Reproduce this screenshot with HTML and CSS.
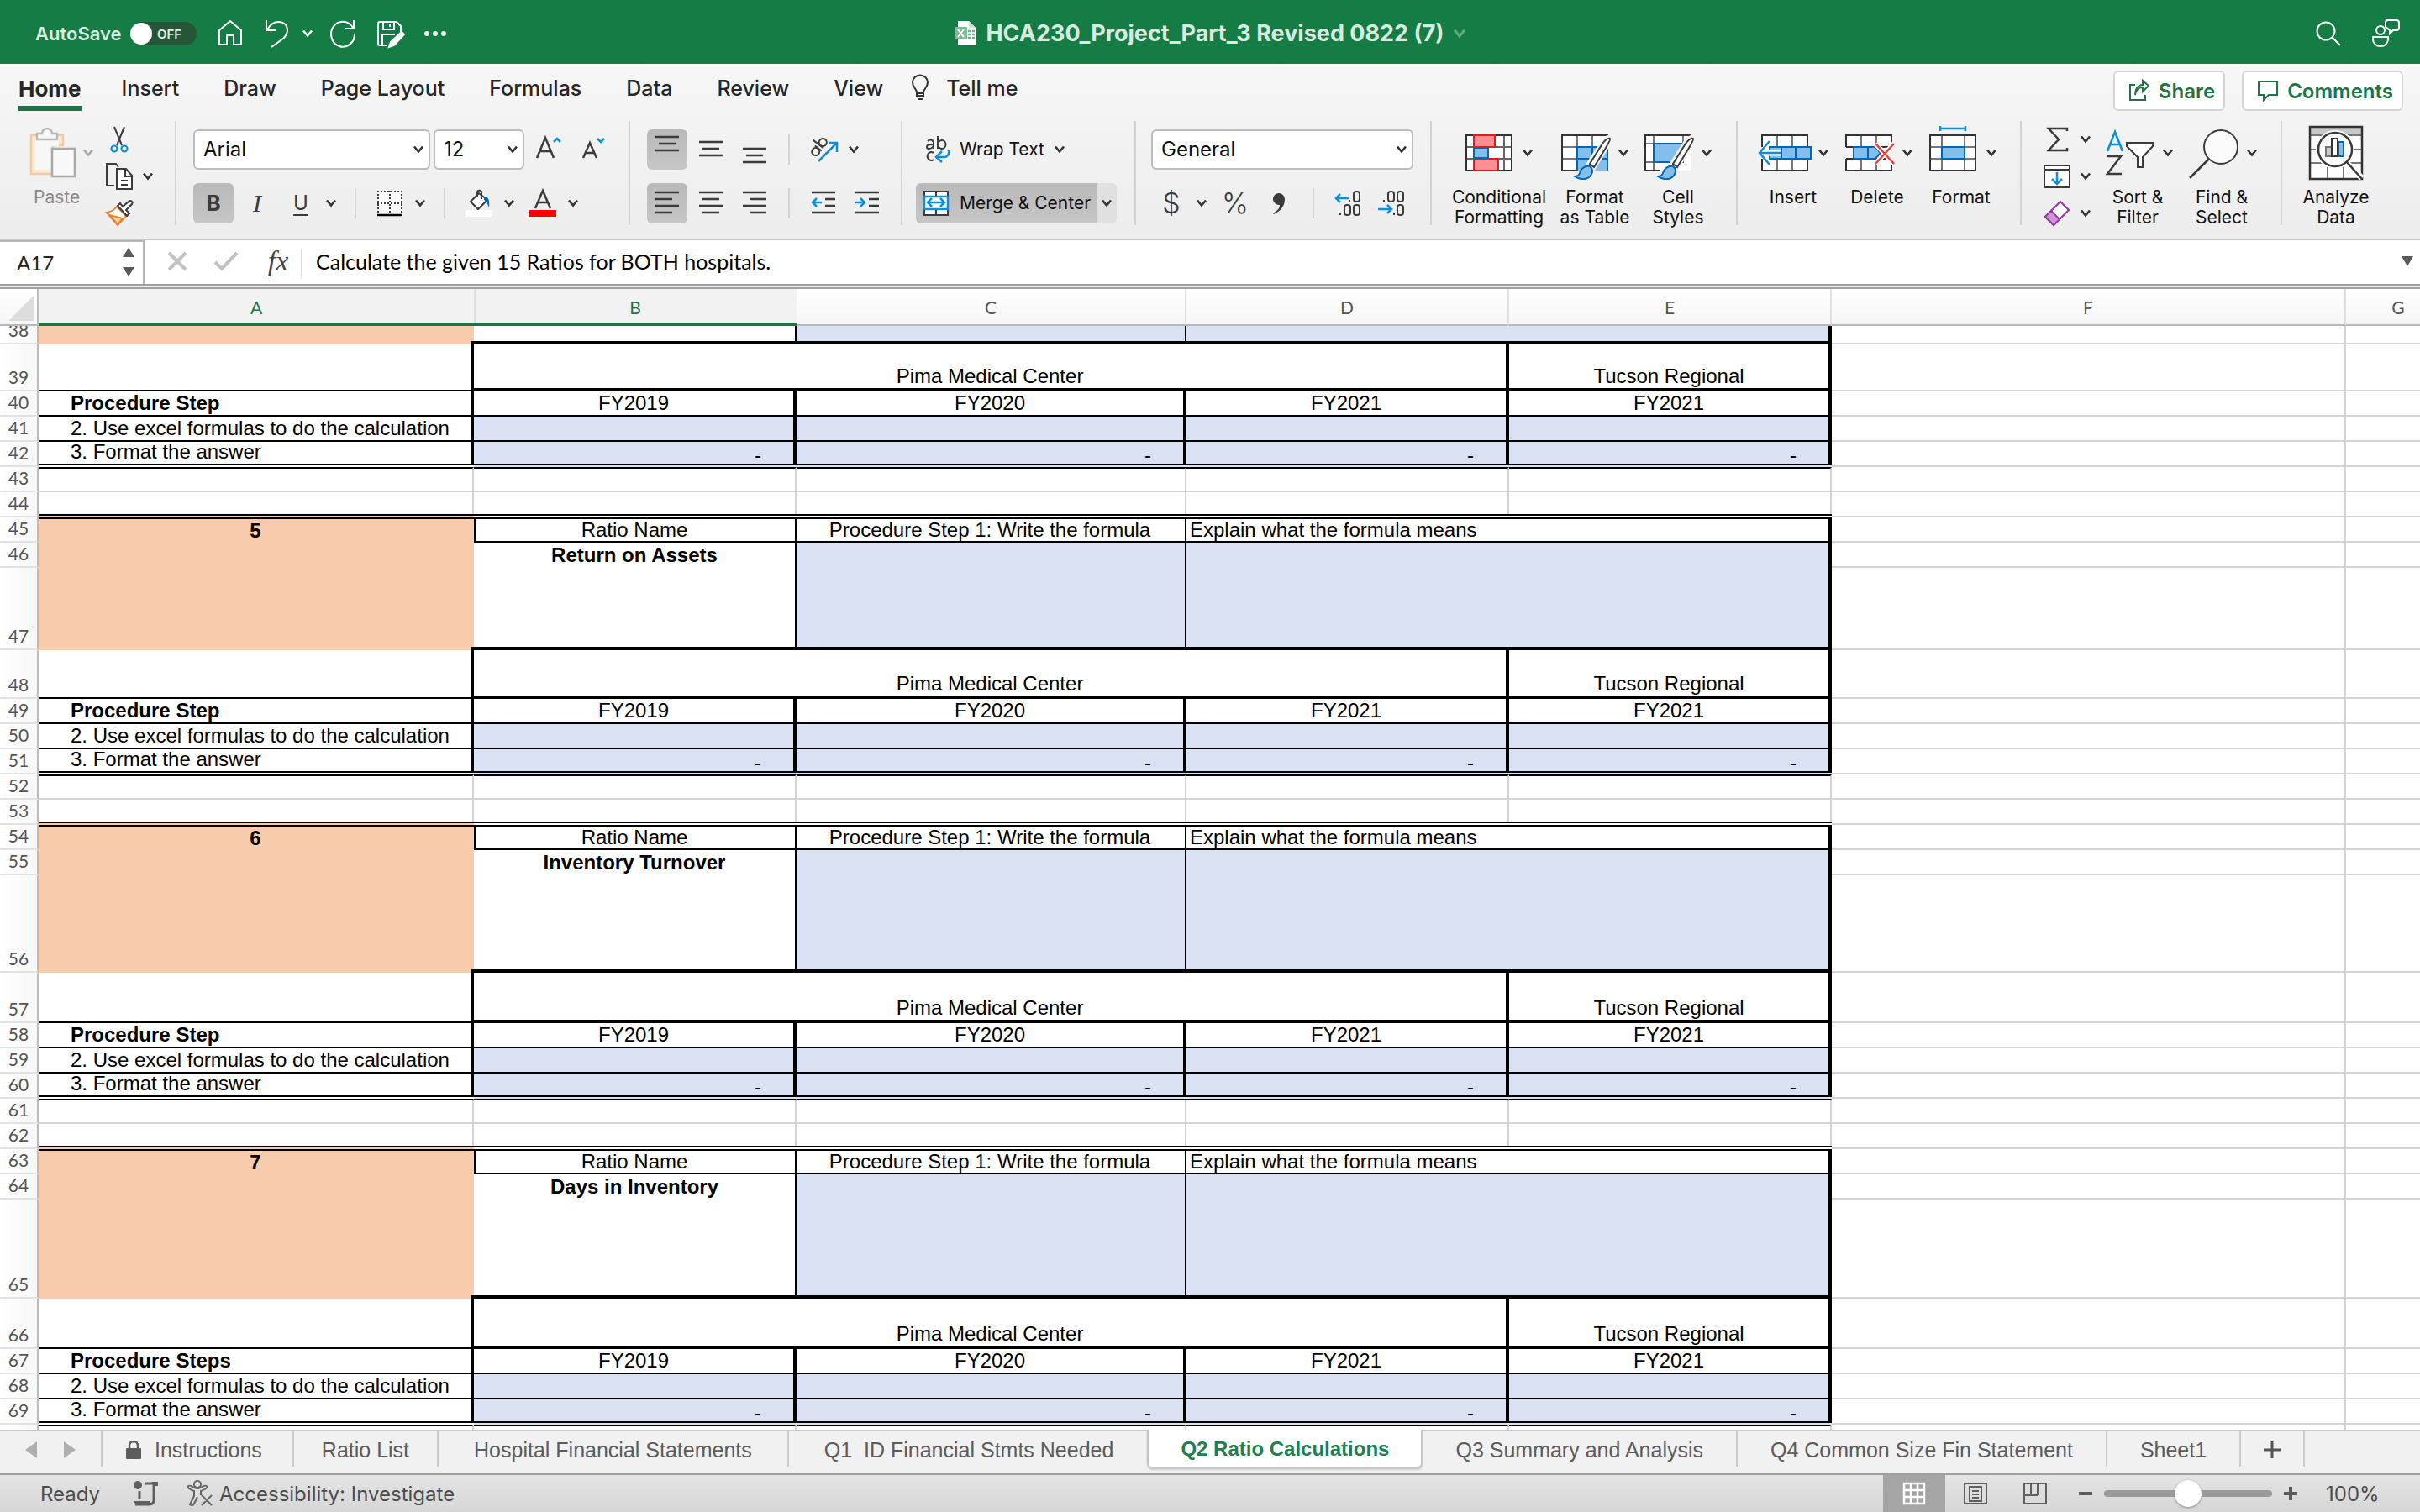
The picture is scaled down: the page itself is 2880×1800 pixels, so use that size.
FILE: index.html
```html
<!DOCTYPE html>
<html lang="en">
<head>
<meta charset="utf-8">
<title>HCA230_Project_Part_3 Revised 0822 (7)</title>
<link rel="stylesheet" href="styles.css">
</head>
<body>
<svg class="defs" aria-hidden="true">
  <symbol id="chev" viewBox="0 0 12 10"><path d="M1 1.500l5 6 5-6" fill="none" stroke="currentColor" stroke-width="2.600"/></symbol>
  <symbol id="brush" viewBox="0 0 60 64"><path d="M58 14c-3-1-6 2-9 6L33 45l5 5 15-24c3-5 6-10 5-12z" fill="#fff" stroke="#f3f3f3" stroke-width="6"/><path d="M58 15c-3-1-6 2-9 6L34 45l5 4 14-23c3-5 6-10 5-11z" fill="#fff" stroke="#3b3b3b" stroke-width="2"/><path d="M34 48c-6-1-11 3-12 8-1 3-3 4-6 4 6 4 13 4 17 1 4-3 5-8 3-11z" fill="#83beec" stroke="#0067b0" stroke-width="2"/></symbol>
</svg>
<div class="app">
  <header class="titlebar">
    <div class="quick">
      <span class="autosave">AutoSave</span>
      <button class="toggle" type="button" aria-label="AutoSave off"><span class="knob"></span><span>OFF</span></button>
      <button class="tbtn" type="button" aria-label="Home"><svg width="32" height="32" viewBox="0 0 32 32"><path d="M3 12L16 1l13 11v17H20V18h-8v11H3z" stroke-linejoin="round"/></svg></button>
      <button class="tbtn undo" type="button" aria-label="Undo"><svg width="32" height="32" viewBox="0 0 32 32"><path d="M3 0v12h11M4 11C8 5 12 2 17 2c7 0 11 4 11 10 0 4-2 7-5 10L9 32"/></svg><svg class="chev" width="12" height="10"><use href="#chev"/></svg></button>
      <button class="tbtn" type="button" aria-label="Redo"><svg width="34" height="34" viewBox="0 0 34 34"><path d="M31 1v10H21M30 10A14 15 0 1 0 32 17"/></svg></button>
      <button class="tbtn" type="button" aria-label="Save"><svg width="32" height="32" viewBox="0 0 32 32"><path d="M13 30H4a2 2 0 0 1-2-2V4a2 2 0 0 1 2-2h20l5 5v7M8 2v9h13V2M16 4v4M7 30V17h15"/><path d="M30 14l3 3-12 13-6 2 2-6z" fill="#fff"/></svg></button>
      <button class="tbtn" type="button" aria-label="More"><svg width="28" height="8" viewBox="0 0 28 8"><g fill="#e6f2ea" stroke="none"><circle cx="4" cy="4" r="3"/><circle cx="14" cy="4" r="3"/><circle cx="24" cy="4" r="3"/></g></svg></button>
    </div>
    <div class="doc">
      <svg width="28" height="30" viewBox="0 0 28 30"><path d="M5 0h13l8 8v21H5z" fill="#fff"/><path d="M18 0v8h8z" fill="#cfe5d8"/><rect x="1" y="7" width="15" height="15" rx="1" fill="#7fb898"/><path d="M5 10l7 9M12 10l-7 9" stroke="#fff" stroke-width="2"/><path d="M17 12h3M17 16h3M17 20h3M22 12h3M22 16h3M22 20h3" stroke="#6fae8b" stroke-width="2.500"/></svg>
      <h1>HCA230_Project_Part_3 Revised 0822 (7)</h1>
      <svg class="chev" width="16" height="12"><use href="#chev"/></svg>
    </div>
    <div class="account">
      <button class="tbtn" type="button" aria-label="Search"><svg width="30" height="30" viewBox="0 0 30 30"><circle cx="12" cy="12" r="10.500"/><path d="M20 20l9 9"/></svg></button>
      <button class="tbtn" type="button" aria-label="Presence"><svg width="34" height="34" viewBox="0 0 34 34"><circle cx="11" cy="13" r="5"/><path d="M2 21h18v3a9 8 0 0 1-18 0zM19 1h11a3 3 0 0 1 3 3v6a3 3 0 0 1-3 3h-4l-4 4v-4l-5-4V4a3 3 0 0 1 2-3z"/></svg></button>
    </div>
  </header>

  <nav class="tabs">
    <a class="on" href="#home">Home</a><a href="#insert">Insert</a><a href="#draw">Draw</a><a href="#layout">Page Layout</a><a href="#formulas">Formulas</a><a href="#data">Data</a><a href="#review">Review</a><a href="#view">View</a>
    <a class="tell" href="#tell"><svg width="22" height="32" viewBox="0 0 22 32"><path d="M7 21c0-4-5-6-5-12a9 8.500 0 0 1 18 0c0 6-5 8-5 12v4H7zM7 22h8M8 29h6" fill="none" stroke="#333" stroke-width="2"/></svg>Tell me</a>
    <span class="grow"></span>
    <button class="pill" type="button"><svg width="26" height="26" viewBox="0 0 26 26"><path d="M8 6H2v18h18v-6M8 18c1-7 5-9 9-9v5l7-7-7-6v5C11 6 8 11 8 18z"/></svg>Share</button>
    <button class="pill" type="button"><svg width="26" height="26" viewBox="0 0 26 26"><path d="M2 2h22v16H14l-6 6v-6H2z"/></svg>Comments</button>
  </nav>

  <section class="ribbon" aria-label="Home ribbon">
    <div class="group g-clip">
      <button class="paste" type="button"><span class="pic"><svg width="56" height="62" viewBox="0 0 56 62"><path d="M2 10h38v12H28v34H2z" fill="#fbead0" stroke="#f3c9a4" stroke-width="2.500"/><path d="M7 14h28v9h-9v28H7z" fill="#f7f7f7"/><path d="M9 15V8h6a6 6 0 0 1 12 0h6v7z" fill="#f7f7f7" stroke="#b9b9b9" stroke-width="2.500"/><path d="M27 26h27v33H27z" fill="#f8f8f8" stroke="#a9a9a9" stroke-width="2.500"/></svg><svg class="chev dim" width="12" height="10"><use href="#chev"/></svg></span><span class="cap">Paste</span></button>
      <div class="stack">
        <button type="button" aria-label="Cut"><svg width="32" height="32" viewBox="0 0 32 32"><path d="M10 1l9 22M22 1l-9 22" stroke="#3b3b3b" stroke-width="2" fill="none"/><circle cx="10" cy="27" r="3.500" fill="none" stroke="#0f8fd3" stroke-width="2.200"/><circle cx="22" cy="27" r="3.500" fill="none" stroke="#0f8fd3" stroke-width="2.200"/></svg></button>
        <button type="button" aria-label="Copy"><svg width="32" height="32" viewBox="0 0 32 32"><path d="M10 27H1V1h11l3 4" fill="none" stroke="#3b3b3b" stroke-width="2"/><path d="M13 7h11l7 8v16H13zM23 8v8h8M18 21h8M18 26h8" fill="#fff" stroke="#3b3b3b" stroke-width="2"/></svg><svg class="chev" width="12" height="10"><use href="#chev"/></svg></button>
        <button type="button" aria-label="Format painter"><svg width="32" height="32" viewBox="0 0 32 32"><path d="M13 8C10 12 6 14 1 15l13 15 10-11z" fill="#fff" stroke="#ec7f31" stroke-width="2"/><path d="M4 18l16 4-6 7z" fill="#fbd9a0" stroke="#ec7f31" stroke-width="2"/><path d="M14 7l11 12 3-3-4-4 7-7c2-3-2-5-4-3l-7 6-3-4z" fill="#fff" stroke="#3b3b3b" stroke-width="2"/></svg></button>
      </div>
    </div>

    <div class="group rows g-font">
      <div class="row">
        <span class="pick w-font"><select aria-label="Font"><option>Arial</option></select><svg class="chev" width="12" height="10"><use href="#chev"/></svg></span>
        <span class="pick w-size"><select aria-label="Font size"><option>12</option></select><svg class="chev" width="12" height="10"><use href="#chev"/></svg></span>
        <button class="ib" type="button" aria-label="Grow font"><svg width="32" height="32" viewBox="0 0 32 32"><path d="M3 26L13 2l10 24M7 18h12" class="k"/><path d="M23 7l4-4 4 4" class="b"/></svg></button>
        <button class="ib" type="button" aria-label="Shrink font"><svg width="32" height="32" viewBox="0 0 32 32"><path d="M6 26l8-18 8 18M9 20h10" class="k"/><path d="M23 3l4 4 4-4" class="b"/></svg></button>
      </div>
      <div class="row">
        <button class="ib on bold" type="button">B</button>
        <button class="ib ital" type="button">I</button>
        <span class="split"><button class="ib und" type="button">U</button><button class="dd" type="button" aria-label="Underline options"><svg class="chev" width="12" height="10"><use href="#chev"/></svg></button></span>
        <i class="sep"></i>
        <span class="split"><button class="ib" type="button" aria-label="Borders"><svg width="32" height="32" viewBox="0 0 32 32"><path d="M2 2h28v28H2z" fill="#fafafa"/><path d="M1 2h30M1 16h30M2 1v28M16 1v28M30 1v28" stroke="#3b3b3b" stroke-width="2" stroke-dasharray="2 2"/><path d="M1 30h30" stroke="#000" stroke-width="2.500"/></svg></button><button class="dd" type="button" aria-label="Border options"><svg class="chev" width="12" height="10"><use href="#chev"/></svg></button></span>
        <i class="sep"></i>
        <span class="split"><button class="ib" type="button" aria-label="Fill colour"><svg width="32" height="32" viewBox="0 0 32 32"><path d="M16 4L6 14l9 9 11-11zM14 8V3c0-3 5-3 5 0v8" fill="#fff" stroke="#3b3b3b" stroke-width="2"/><path d="M22 8c5 0 7 4 6 13-2-5-3-7-6-9z" fill="#0067b0"/><path d="M0 24h32v8H0z" fill="#fff"/></svg></button><button class="dd" type="button" aria-label="Fill options"><svg class="chev" width="12" height="10"><use href="#chev"/></svg></button></span>
        <span class="split"><button class="ib" type="button" aria-label="Font colour"><svg width="32" height="32" viewBox="0 0 32 32"><path d="M7 22l9-21 9 21M10 15h12" class="k"/><path d="M0 24h32v8H0z" fill="#f00"/></svg></button><button class="dd" type="button" aria-label="Font colour options"><svg class="chev" width="12" height="10"><use href="#chev"/></svg></button></span>
      </div>
    </div>

    <div class="group rows g-align">
      <div class="row">
        <button class="ib on" type="button" aria-label="Top align"><svg width="32" height="32" viewBox="0 0 32 32"><path d="M2 1h28M6 9h20M2 17h28" class="k"/></svg></button>
        <button class="ib" type="button" aria-label="Middle align"><svg width="32" height="32" viewBox="0 0 32 32"><path d="M2 7h28M6 15h20M2 23h28" class="k"/></svg></button>
        <button class="ib" type="button" aria-label="Bottom align"><svg width="32" height="32" viewBox="0 0 32 32"><path d="M2 15h28M6 23h20M2 31h28" class="k"/></svg></button>
        <i class="sep"></i>
        <span class="split"><button class="ib" type="button" aria-label="Orientation"><svg width="32" height="32" viewBox="0 0 32 32"><g class="k thin" transform="rotate(-52 11 13)"><circle cx="4" cy="13" r="4.500"/><path d="M9 8v10M13 2v16"/><circle cx="18" cy="13" r="4.500"/></g><path d="M10 30L31 9M22 8h10v11" class="b"/></svg></button><button class="dd" type="button" aria-label="Orientation options"><svg class="chev" width="12" height="10"><use href="#chev"/></svg></button></span>
      </div>
      <div class="row">
        <button class="ib on" type="button" aria-label="Align left"><svg width="32" height="32" viewBox="0 0 32 32"><path d="M2 3h28M2 11h20M2 19h28M2 27h20" class="k"/></svg></button>
        <button class="ib" type="button" aria-label="Centre"><svg width="32" height="32" viewBox="0 0 32 32"><path d="M2 3h28M6 11h20M2 19h28M6 27h20" class="k"/></svg></button>
        <button class="ib" type="button" aria-label="Align right"><svg width="32" height="32" viewBox="0 0 32 32"><path d="M2 3h28M10 11h20M2 19h28M10 27h20" class="k"/></svg></button>
        <i class="sep"></i>
        <button class="ib" type="button" aria-label="Decrease indent"><svg width="32" height="32" viewBox="0 0 32 32"><path d="M2 3h28M18 11h12M18 19h12M2 27h28" class="k"/><path d="M14 15H3M8 10l-5 5 5 5" class="b"/></svg></button>
        <button class="ib" type="button" aria-label="Increase indent"><svg width="32" height="32" viewBox="0 0 32 32"><path d="M2 3h28M18 11h12M18 19h12M2 27h28" class="k"/><path d="M2 15h11M8 10l5 5-5 5" class="b"/></svg></button>
      </div>
    </div>

    <div class="group rows g-wrap">
      <button class="wide" type="button"><svg width="32" height="32" viewBox="0 0 32 32"><g class="k thin"><path d="M6 6c3-3 7-1 7 2v7M13 10c-5 0-8 0-8 3s5 3 8-1M18 0v15"/><ellipse cx="23" cy="10" rx="4.500" ry="5"/><path d="M13 20a4.500 5 0 1 0 0 8"/></g><path d="M31 16c1 7-2 9-5 9H17M23 18l-7 7 7 6" class="b"/></svg><span>Wrap Text</span><svg class="chev" width="12" height="10"><use href="#chev"/></svg></button>
      <span class="split"><button class="wide on" type="button"><svg width="32" height="32" viewBox="0 0 32 32"><path d="M2 2h28v28H2zM16 2v28" fill="#fff" stroke="#3b3b3b" stroke-width="2"/><path d="M2 8h28v15H2z" fill="#fff" stroke="#0f8fd3" stroke-width="2.500"/><path d="M6 15h20M11 10l-5 5 5 5M21 10l5 5-5 5" class="b"/></svg><span>Merge &amp; Center</span></button><button class="dd soft" type="button" aria-label="Merge options"><svg class="chev" width="12" height="10"><use href="#chev"/></svg></button></span>
    </div>

    <div class="group rows g-num">
      <div class="row"><span class="pick w-num"><select aria-label="Number format"><option>General</option></select><svg class="chev" width="12" height="10"><use href="#chev"/></svg></span></div>
      <div class="row">
        <span class="split"><button class="ib sym" type="button">$</button><button class="dd" type="button" aria-label="Currency options"><svg class="chev" width="12" height="10"><use href="#chev"/></svg></button></span>
        <button class="ib sym" type="button">%</button>
        <button class="ib" type="button" aria-label="Comma style"><svg width="20" height="28" viewBox="0 0 20 28"><path d="M3 26c5-3 8-6 8-10A7 7 0 1 1 17 9c0 9-5 14-13 18z" fill="#3b3b3b"/></svg></button>
        <i class="sep"></i>
        <button class="ib" type="button" aria-label="Increase decimal"><svg width="32" height="32" viewBox="0 0 32 32"><g class="k thin"><rect x="23" y="2" width="7" height="12" rx="3"/><rect x="12" y="18" width="7" height="12" rx="3"/><rect x="23" y="18" width="7" height="12" rx="3"/><path d="M18 12v2M7 28v2"/></g><path d="M17 10H1M7 5L2 10l5 5" class="b"/></svg></button>
        <button class="ib" type="button" aria-label="Decrease decimal"><svg width="32" height="32" viewBox="0 0 32 32"><g class="k thin"><rect x="12" y="2" width="7" height="12" rx="3"/><rect x="23" y="2" width="7" height="12" rx="3"/><rect x="23" y="18" width="7" height="12" rx="3"/><path d="M7 12v2M19 28v2"/></g><path d="M0 23h16M11 18l5 5-5 5" class="b"/></svg></button>
      </div>
    </div>

    <div class="group bigs g-style">
      <button class="big" type="button"><span class="pic"><svg width="60" height="64" viewBox="0 0 60 64"><path d="M1 11h54v42H1zM10 11v42M46 11v42M1 25h54M1 39h54" fill="#fdfdfd" stroke="#666" stroke-width="2"/><path d="M1 11h54v42H1z" fill="none" stroke="#333" stroke-width="2"/><path d="M10 11h25v14H10zM10 39h29v14H10z" fill="#ff8f95" stroke="#d9201c" stroke-width="2"/><path d="M10 26h17v12H10z" fill="#83beec" stroke="#0067b0" stroke-width="2"/></svg><svg class="chev" width="12" height="10"><use href="#chev"/></svg></span><span class="cap">Conditional<br>Formatting</span></button>
      <button class="big ft" type="button"><span class="pic"><svg width="60" height="64" viewBox="0 0 60 64"><path d="M1 11h54v42H1z" fill="#fdfdfd"/><path d="M19 25h36v28H19z" fill="#83beec"/><path d="M19 11v14M37 11v14M1 25h18M1 39h18" stroke="#777" stroke-width="2"/><path d="M19 53V25h36v28M37 25v28M19 39h36" fill="none" stroke="#0067b0" stroke-width="2"/><path d="M55 25V11H1v42h18" fill="none" stroke="#333" stroke-width="2"/><use href="#brush"/></svg><svg class="chev" width="12" height="10"><use href="#chev"/></svg></span><span class="cap">Format<br>as Table</span></button>
      <button class="big cs" type="button"><span class="pic"><svg width="60" height="64" viewBox="0 0 60 64"><path d="M1 11h54v42H1z" fill="#fdfdfd"/><path d="M11 11v42M46 11v10M1 21h54M1 43h20" stroke="#777" stroke-width="2"/><path d="M11 21h35v22H11z" fill="#83beec" stroke="#0067b0" stroke-width="2"/><path d="M55 20v-9H1v42h18" fill="none" stroke="#333" stroke-width="2"/><use href="#brush"/></svg><svg class="chev" width="12" height="10"><use href="#chev"/></svg></span><span class="cap">Cell<br>Styles</span></button>
    </div>

    <div class="group bigs g-cells">
      <button class="big" type="button"><span class="pic"><svg width="60" height="64" viewBox="0 0 60 64"><path d="M1 11h54v42H1z" fill="#fdfdfd"/><path d="M19 11v42M37 11v42" stroke="#777" stroke-width="2"/><path d="M1 25V11h54v14M1 39v14h54V39" fill="none" stroke="#333" stroke-width="2"/><path d="M10 25h49v14H10zM24 25v14M41 25v14" fill="#83beec" stroke="#0067b0" stroke-width="2"/><path d="M24 32H-2" stroke="#fdfdfd" stroke-width="7"/><path d="M24 32H-1M10 18L-2 32l12 14" class="b"/></svg><svg class="chev" width="12" height="10"><use href="#chev"/></svg></span><span class="cap">Insert</span></button>
      <button class="big" type="button"><span class="pic"><svg width="60" height="64" viewBox="0 0 60 64"><path d="M1 11h54v42H1z" fill="#fdfdfd"/><path d="M19 11v42M37 11v42" stroke="#777" stroke-width="2"/><path d="M1 25V11h54v14H1M1 39v14h54V39H1" fill="none" stroke="#333" stroke-width="2"/><path d="M0 26h56v12H0z" fill="#f3f3f3"/><path d="M10 25h26l6 7-6 7H10zM27 25v14" fill="#83beec" stroke="#0067b0" stroke-width="2"/><path d="M36 21l22 24M58 21L36 45" stroke="#fdfdfd" stroke-width="6"/><path d="M36 21l22 24M58 21L36 45" stroke="#ee3e3a" stroke-width="2.500"/></svg><svg class="chev" width="12" height="10"><use href="#chev"/></svg></span><span class="cap">Delete</span></button>
      <button class="big" type="button"><span class="pic"><svg width="60" height="64" viewBox="0 0 60 64"><path d="M1 11h54v42H1zM15 11v42M42 11v42M1 25h54M1 39h54" fill="#fdfdfd" stroke="#777" stroke-width="2"/><path d="M1 11h54v42H1z" fill="none" stroke="#333" stroke-width="2"/><path d="M15 25h27v14H15z" fill="#83beec" stroke="#0067b0" stroke-width="2"/><path d="M13 3h30M13 0v6M43 0v6" class="b"/></svg><svg class="chev" width="12" height="10"><use href="#chev"/></svg></span><span class="cap">Format</span></button>
    </div>

    <div class="group bigs g-edit">
      <div class="stack">
        <button type="button" aria-label="AutoSum"><svg width="32" height="32" viewBox="0 0 32 32"><path d="M28 6V3H6l12 13L6 29h22v-3" class="k"/></svg><svg class="chev" width="12" height="10"><use href="#chev"/></svg></button>
        <button type="button" aria-label="Fill"><svg width="32" height="32" viewBox="0 0 32 32"><path d="M1 3h30v26H1zM1 8h30" fill="#fff" stroke="#3b3b3b" stroke-width="2"/><path d="M16 11v14M10 19l6 6 6-6" class="b"/></svg><svg class="chev" width="12" height="10"><use href="#chev"/></svg></button>
        <button type="button" aria-label="Clear"><svg width="32" height="32" viewBox="0 0 32 32"><path d="M20 2l10 10-18 18L2 20z" fill="#fff" stroke="#963ba0" stroke-width="2.200"/><path d="M9 13L2 20l10 10 7-7z" fill="#d295d8" stroke="#963ba0" stroke-width="2"/></svg><svg class="chev" width="12" height="10"><use href="#chev"/></svg></button>
      </div>
      <button class="big" type="button"><span class="pic"><svg width="60" height="64" viewBox="0 0 60 64"><path d="M2 30l9-23 9 23M5 22h12" class="b"/><path d="M2 36h16L2 57h17" class="k"/><path d="M25 20h31v4L44 37v12h-6V37L25 24z" fill="#fff" stroke="#3b3b3b" stroke-width="2"/></svg><svg class="chev" width="12" height="10"><use href="#chev"/></svg></span><span class="cap">Sort &amp;<br>Filter</span></button>
      <button class="big" type="button"><span class="pic"><svg width="60" height="64" viewBox="0 0 60 64"><circle cx="37" cy="25" r="20" fill="#fafafa" stroke="#3b3b3b" stroke-width="2"/><path d="M23 39L0 62" class="k"/></svg><svg class="chev" width="12" height="10"><use href="#chev"/></svg></span><span class="cap">Find &amp;<br>Select</span></button>
    </div>

    <div class="group bigs g-data">
      <button class="big" type="button"><span class="pic"><svg width="64" height="64" viewBox="0 0 64 64"><path d="M1 1h62v62H1z" fill="#fdfdfd"/><path d="M1 1h62v9H1z" fill="#c8c8c8"/><path d="M1 11h62M1 28h62M1 44h62M22 44v19M41 44v19" stroke="#777" stroke-width="2"/><path d="M1 1h62v62H1z" fill="none" stroke="#333" stroke-width="2.500"/><circle cx="31" cy="28" r="23" fill="#fdfdfd"/><circle cx="31" cy="28" r="20" fill="#fdfdfd" stroke="#3b3b3b" stroke-width="2.500"/><path d="M45 44l18 18" stroke="#fdfdfd" stroke-width="7"/><path d="M45 43l18 20" stroke="#3b3b3b" stroke-width="2.500"/><path d="M20 25h7v11h-7z" fill="#c8c8c8" stroke="#777" stroke-width="2"/><path d="M35 19h6v17h-6z" fill="#83beec" stroke="#0067b0" stroke-width="2"/><path d="M27 15h7v21h-7z" fill="#fff" stroke="#333" stroke-width="2"/></svg></span><span class="cap">Analyze<br>Data</span></button>
    </div>
  </section>

  <section class="fbar" aria-label="Formula bar">
    <div class="namebox"><input type="text" value="A17" aria-label="Name box"><span class="spin"><svg width="14" height="34" viewBox="0 0 14 34"><path d="M7 0l7 11H0zM7 34l7-11H0z" fill="#595959"/></svg></span></div>
    <button type="button" aria-label="Cancel"><svg width="26" height="24" viewBox="0 0 26 24"><path d="M3 2l20 20M23 2L3 22" stroke="#c2c2c2" stroke-width="4"/></svg></button>
    <button type="button" aria-label="Enter"><svg width="30" height="24" viewBox="0 0 30 24"><path d="M2 13l8 8L28 2" fill="none" stroke="#c2c2c2" stroke-width="4"/></svg></button>
    <button class="fx" type="button">fx</button>
    <input class="formula" type="text" value="Calculate the given 15 Ratios for BOTH hospitals." aria-label="Formula">
    <button class="expand" type="button" aria-label="Expand"><svg width="14" height="12" viewBox="0 0 14 12"><path d="M0 0h14L7 12z" fill="#595959"/></svg></button>
  </section>

  <div class="cols">
    <span class="corner"><svg width="30" height="30" viewBox="0 0 30 30"><path d="M30 0v30H0z" fill="#dcdcdc"/></svg></span>
    <span class="sel">A</span><span class="sel">B</span><span>C</span><span>D</span><span>E</span><span>F</span><span>G</span>
  </div>

  <main class="sheet">
    <table>
      <colgroup><col class="c-h"><col class="c-a"><col class="c-b"><col class="c-c"><col class="c-b"><col class="c-b"><col class="c-f"><col></colgroup>
      <tbody>
      <tr><th>38</th><td class="num"></td><td class="name"></td><td class="in"></td><td class="in last" colspan="2"></td><td></td><td></td></tr>
      <tr class="h56 hosp"><th>39</th><td class="step"></td><td colspan="3">Pima Medical Center</td><td>Tucson Regional</td><td></td><td></td></tr>
      <tr class="year"><th>40</th><td class="step b">Procedure Step</td><td>FY2019</td><td>FY2020</td><td>FY2021</td><td>FY2021</td><td></td><td></td></tr>
      <tr class="calc"><th>41</th><td class="step">2. Use excel formulas to do the calculation</td><td></td><td></td><td></td><td></td><td></td><td></td></tr>
      <tr class="calc ans"><th>42</th><td class="step">3. Format the answer</td><td>-</td><td>-</td><td>-</td><td>-</td><td></td><td></td></tr>
      <tr class="after"><th>43</th><td></td><td></td><td></td><td></td><td></td><td></td><td></td></tr>
      <tr><th>44</th><td></td><td></td><td></td><td></td><td></td><td></td><td></td></tr>

      <tr class="top"><th>45</th><td class="num" rowspan="3">5</td><td>Ratio Name</td><td>Procedure Step 1: Write the formula</td><td class="exp" colspan="2">Explain what the formula means</td><td></td><td></td></tr>
      <tr><th>46</th><td class="name" rowspan="2">Return on Assets</td><td class="in" rowspan="2"></td><td class="in last" colspan="2" rowspan="2"></td><td></td><td></td></tr>
      <tr class="h98"><th>47</th><td></td><td></td></tr>
      <tr class="h58 hosp"><th>48</th><td class="step"></td><td colspan="3">Pima Medical Center</td><td>Tucson Regional</td><td></td><td></td></tr>
      <tr class="year"><th>49</th><td class="step b">Procedure Step</td><td>FY2019</td><td>FY2020</td><td>FY2021</td><td>FY2021</td><td></td><td></td></tr>
      <tr class="calc"><th>50</th><td class="step">2. Use excel formulas to do the calculation</td><td></td><td></td><td></td><td></td><td></td><td></td></tr>
      <tr class="calc ans"><th>51</th><td class="step">3. Format the answer</td><td>-</td><td>-</td><td>-</td><td>-</td><td></td><td></td></tr>
      <tr class="after"><th>52</th><td></td><td></td><td></td><td></td><td></td><td></td><td></td></tr>
      <tr><th>53</th><td></td><td></td><td></td><td></td><td></td><td></td><td></td></tr>

      <tr class="top"><th>54</th><td class="num" rowspan="3">6</td><td>Ratio Name</td><td>Procedure Step 1: Write the formula</td><td class="exp" colspan="2">Explain what the formula means</td><td></td><td></td></tr>
      <tr><th>55</th><td class="name" rowspan="2">Inventory Turnover</td><td class="in" rowspan="2"></td><td class="in last" colspan="2" rowspan="2"></td><td></td><td></td></tr>
      <tr class="h116"><th>56</th><td></td><td></td></tr>
      <tr class="h60 hosp"><th>57</th><td class="step"></td><td colspan="3">Pima Medical Center</td><td>Tucson Regional</td><td></td><td></td></tr>
      <tr class="year"><th>58</th><td class="step b">Procedure Step</td><td>FY2019</td><td>FY2020</td><td>FY2021</td><td>FY2021</td><td></td><td></td></tr>
      <tr class="calc"><th>59</th><td class="step">2. Use excel formulas to do the calculation</td><td></td><td></td><td></td><td></td><td></td><td></td></tr>
      <tr class="calc ans"><th>60</th><td class="step">3. Format the answer</td><td>-</td><td>-</td><td>-</td><td>-</td><td></td><td></td></tr>
      <tr class="after"><th>61</th><td></td><td></td><td></td><td></td><td></td><td></td><td></td></tr>
      <tr><th>62</th><td></td><td></td><td></td><td></td><td></td><td></td><td></td></tr>

      <tr class="top"><th>63</th><td class="num" rowspan="3">7</td><td>Ratio Name</td><td>Procedure Step 1: Write the formula</td><td class="exp" colspan="2">Explain what the formula means</td><td></td><td></td></tr>
      <tr><th>64</th><td class="name" rowspan="2">Days in Inventory</td><td class="in" rowspan="2"></td><td class="in last" colspan="2" rowspan="2"></td><td></td><td></td></tr>
      <tr class="h118"><th>65</th><td></td><td></td></tr>
      <tr class="h60 hosp"><th>66</th><td class="step"></td><td colspan="3">Pima Medical Center</td><td>Tucson Regional</td><td></td><td></td></tr>
      <tr class="year"><th>67</th><td class="step b">Procedure Steps</td><td>FY2019</td><td>FY2020</td><td>FY2021</td><td>FY2021</td><td></td><td></td></tr>
      <tr class="calc"><th>68</th><td class="step">2. Use excel formulas to do the calculation</td><td></td><td></td><td></td><td></td><td></td><td></td></tr>
      <tr class="calc ans"><th>69</th><td class="step">3. Format the answer</td><td>-</td><td>-</td><td>-</td><td>-</td><td></td><td></td></tr>
      <tr class="after"><th></th><td></td><td></td><td></td><td></td><td></td><td></td><td></td></tr>
      </tbody>
    </table>
  </main>

  <nav class="sheets" aria-label="Sheets">
    <span class="arrows"><button type="button" aria-label="Previous sheet"><svg width="14" height="20" viewBox="0 0 14 20"><path d="M14 0v20L0 10z" fill="#b0b0b0"/></svg></button><button type="button" aria-label="Next sheet"><svg width="14" height="20" viewBox="0 0 14 20"><path d="M0 0v20l14-10z" fill="#b0b0b0"/></svg></button></span>
    <a class="lock" href="#s1"><svg width="18" height="22" viewBox="0 0 18 22"><path d="M4 10V6a5 5 0 0 1 10 0v4" fill="none" stroke="#5c5c5c" stroke-width="2.500"/><rect y="9" width="18" height="13" rx="1" fill="#5c5c5c"/></svg>Instructions</a>
    <a class="narrow" href="#s2">Ratio List</a>
    <a href="#s3">Hospital Financial Statements</a>
    <a class="pre" href="#s4">Q1&nbsp; ID Financial Stmts Needed</a>
    <a class="on" href="#s5">Q2 Ratio Calculations</a>
    <a class="late" href="#s6">Q3 Summary and Analysis</a>
    <a class="late" href="#s7">Q4 Common Size Fin Statement</a>
    <a class="late" href="#s8">Sheet1</a>
    <button class="add" type="button" aria-label="Add sheet"><svg width="20" height="20" viewBox="0 0 20 20"><path d="M10 0v20M0 10h20" stroke="#555" stroke-width="3"/></svg></button>
  </nav>

  <footer class="status">
    <span class="ready">Ready</span>
    <svg class="macro" width="32" height="32" viewBox="0 0 32 32"><circle cx="6" cy="6" r="5" fill="#5f5f5f"/><path d="M14 4h14M25 4v20c0 4-3 5-6 5H3M8 13v10" fill="none" stroke="#5f5f5f" stroke-width="3"/><path d="M22 2h8v5h-3zM1 25h19v5H4z" fill="#5f5f5f"/></svg>
    <svg class="acc" width="32" height="32" viewBox="0 0 32 32"><g fill="none" stroke="#666" stroke-width="2"><circle cx="13" cy="5" r="4"/><path d="M2 7c-1 3 2 4 7 6v6L4 29c2 2 4 1 5-1l4-8M24 7c1 3-2 4-7 6v5M2 7c3-2 6 3 11 3s8-5 11-3M18 18l12 12M30 18L18 30"/></g></svg>
    <span>Accessibility: Investigate</span>
    <span class="grow"></span>
    <button class="view on" type="button" aria-label="Normal view"><svg width="28" height="28" viewBox="0 0 28 28"><path d="M2 2h24v24H2zM10 2v24M18 2v24M2 10h24M2 18h24" fill="none" stroke="#fff" stroke-width="2.500"/></svg></button>
    <button class="view" type="button" aria-label="Page layout view"><svg width="28" height="28" viewBox="0 0 28 28"><path d="M1 2h26v24H1zM7 6h14v17H7zM10 11h8M10 15h8M10 19h8" fill="none" stroke="#5f5f5f" stroke-width="2"/></svg></button>
    <button class="view" type="button" aria-label="Page break view"><svg width="28" height="28" viewBox="0 0 28 28"><path d="M1 2h26v24H1zM9 2v14M17 2v14M1 16h16" fill="none" stroke="#5f5f5f" stroke-width="2"/></svg></button>
    <button class="zb out" type="button" aria-label="Zoom out"><svg width="16" height="16" viewBox="0 0 16 16"><path d="M0 8h16" stroke="#5a5a5a" stroke-width="4"/></svg></button>
    <input class="zoom" type="range" min="0" max="200" value="100" aria-label="Zoom">
    <button class="zb" type="button" aria-label="Zoom in"><svg width="16" height="16" viewBox="0 0 16 16"><path d="M0 8h16M8 0v16" stroke="#5a5a5a" stroke-width="4"/></svg></button>
    <span class="pct">100%</span>
  </footer>
</div>
</body>
</html>
```
FILE: styles.css
```css
*{box-sizing:border-box}
html,body{margin:0;height:100%}
body{font-family:Inter,"Liberation Sans",sans-serif;color:#1e1e1e;background:#fff;overflow:hidden}
button,input,select{font:inherit;color:inherit;border:0;background:none;padding:0;margin:0;border-radius:0}
a{color:inherit;text-decoration:none}
svg{display:block;flex:none;overflow:visible}
.defs{position:absolute;width:0;height:0}
.app{display:flex;flex-direction:column;height:100vh}
.app>*{flex:none}
.grow{flex:1}
.k{fill:none;stroke:#3b3b3b;stroke-width:2.5}
.k.thin{stroke-width:2}
svg .b{fill:none;stroke:#0f8fd3;stroke-width:2.5}
.chev{color:#333}
.chev.dim{color:#a8a8a8}

/* title bar */
.titlebar{display:grid;grid-template-columns:1fr auto 1fr;align-items:center;height:76px;padding:4px 24px 0;background:#167c45;color:#d9ebe0}
.quick,.doc,.account{display:flex;align-items:center}
.quick{padding-left:18px}
.autosave{width:113px;font-size:22px;font-weight:600}
.toggle{display:flex;align-items:center;gap:6px;width:79px;height:28px;margin-right:24px;border-radius:14px;background:#25563a;color:#e0ebe4;font-size:15px;font-weight:600}
.knob{width:26px;height:26px;border-radius:50%;background:#fff}
.tbtn{display:flex;align-items:center;gap:14px;margin-right:24px}
.tbtn.undo{margin-right:18px;gap:14px}
.tbtn svg{fill:none;stroke:#fff;stroke-width:2}
.tbtn .chev{color:#fff;stroke:none}
.doc{gap:10px}
.doc h1{margin:0;font-size:27px;line-height:32px;font-weight:700;color:#d9ebe0}
.doc .chev{color:#63a882}
.account{justify-content:flex-end}
.account .tbtn{margin:0 0 0 36px}

/* ribbon tabs */
.tabs{display:flex;align-items:center;height:64px;padding:0 20px 0 22px;gap:53px;background:linear-gradient(#f7f7f7,#f3f3f3);font-size:25px;font-weight:500;color:#262626}
.tabs a{display:flex;align-items:center;height:64px;padding-bottom:6px}
.tabs a.on{font-size:26px;margin-right:-5px;font-weight:700;background:linear-gradient(#217346,#217346) 0 50px/100% 6px no-repeat}
.tabs .tell{gap:20px;margin-left:-20px}
.pill{display:flex;align-items:center;gap:10px;height:48px;padding:0 10px 0 16px;border:2px solid #d5d5d5;border-radius:6px;background:#fff;color:#217346;font-size:24px;font-weight:600}
.pill svg{fill:none;stroke:#217346;stroke-width:2}
.pill+.pill{margin-left:-33px}

/* ribbon */
.ribbon{display:flex;padding:4px 0 16px;border-bottom:2px solid #c6c6c6;background:linear-gradient(#f3f3f3,#ededed);font-size:21px;line-height:24px}
.group{display:flex;height:124px;border-right:2px solid #d3d3d3}
.group:last-child{border-right:0}
.rows{flex-direction:column;gap:16px;padding-top:10px}
.row{display:flex;gap:4px;height:48px}
.split{display:flex}
.g-clip{width:210px;padding:6px 0 0 34px;gap:14px}
.g-font{width:540px;padding-left:20px}
.g-align{width:324px;padding-left:20px}
.g-wrap{width:278px;padding-left:16px}
.g-num{width:352px;padding-left:18px}
.g-style{width:364px;padding-left:20px}
.g-cells{width:338px;padding-left:16px}
.g-edit{width:310px;padding-left:26px}
.g-data{padding-left:14px}
.bigs{padding-top:6px}
.paste{display:block;width:78px;color:#8a8a8a;text-align:left;align-self:flex-start}
.pic{display:flex;align-items:center;justify-content:center;gap:8px;height:64px}
.g-cells .pic,.g-edit .pic{padding-left:4px}
.cap{display:block;padding-top:9px}
.paste .cap{padding-left:6px}
.stack{display:flex;flex-direction:column;gap:12px;width:56px}
.stack button{display:flex;align-items:center;gap:12px;height:32px}
.g-edit .stack{margin-right:6px}
.pick{display:grid;align-items:center}
.pick>*{grid-area:1/1}
.pick .chev{justify-self:end;margin-right:8px}
.pick select{appearance:none;width:100%;height:48px;padding:0 10px;border:2px solid #bdbdbd;border-radius:6px;background:#fff;color:#111;font-size:24px}
.w-font{width:282px}
.w-size{width:108px}
.w-num{width:312px}
.ib{display:flex;align-items:center;justify-content:center;width:48px;height:48px;border-radius:6px;color:#3b3b3b;font-size:28px}
.on.ib,.wide.on{background:linear-gradient(#b9b9b9,#c6c6c6)}
.bold{font-weight:700;font-size:26px}
.ital{font-family:"Liberation Serif",serif;font-style:italic;font-size:30px}
.und{font-size:24px;text-decoration:underline;text-underline-offset:5px;text-decoration-thickness:2px}
.sym{font-size:34px;font-weight:300}
.dd{display:flex;align-items:center;justify-content:center;width:24px;height:48px}
.dd.soft{background:#e0e0e0;border-radius:0 6px 6px 0}
.sep{width:2px;height:36px;margin:6px 12px;background:#d3d3d3}
.wide{display:flex;align-items:center;gap:12px;height:48px;padding-left:8px;color:#111;white-space:nowrap}
.wide.on{width:215px;border-radius:6px 0 0 6px}
.big{display:block;width:100px;color:#111;text-align:center;white-space:nowrap;align-self:flex-start}
.g-style .big{width:120px}
.g-style .ft{width:108px}
.g-style .cs{width:90px}

/* formula bar */
.fbar{display:flex;align-items:center;height:58px;border-bottom:2px solid #a0a0a0;background:linear-gradient(#fff,#fff) 0 0/100% 52px no-repeat,linear-gradient(#a0a0a0,#a0a0a0) 0 52px/100% 2px no-repeat,#ececec;font-family:Lato,"Liberation Sans",sans-serif}
.fbar>*{padding-bottom:6px}
.namebox{display:flex;align-items:center;width:172px;height:52px;padding:0 10px 2px 20px;border:2px solid #b5b5b5;border-left:0;border-bottom:0;align-self:flex-start}
.namebox input{flex:1;min-width:0;font-size:24px;color:#222}
.fbar button{margin-left:30px}
.fbar button:first-of-type{margin-left:26px}
.fbar .fx{width:34px;font-family:"Liberation Serif",serif;font-style:italic;font-size:34px;line-height:36px;color:#444}
.formula{flex:1;height:36px;margin-left:10px;padding:0 0 0 16px;font-size:25px;color:#000;border-left:2px solid #e2e2e2}
.fbar>.formula{padding-bottom:6px}
.fbar .expand{margin-right:8px}

/* column headings */
.cols{display:grid;grid-template-columns:46px 518px 384px 464px 384px 384px 612px 1fr;height:44px;font-family:Lato,"Liberation Sans",sans-serif;font-size:21px;line-height:26px;text-align:center;color:#555}
.cols span{height:44px;padding-top:9px;border-right:2px solid #e0e0e0;border-bottom:2px solid #b8b8b8;background:linear-gradient(#fff,#f6f6f6)}
.cols .sel{border-right:0;border-bottom:4px solid #217346;background:#f2f2f2;color:#217346}
.cols .sel+.sel{box-shadow:inset 2px 0 0 #e0e0e0}
.cols span:last-child{border-right:0;padding-left:36px}
.cols .corner{display:flex;justify-content:flex-end;padding:8px 4px 0 0;border-right-color:#bbb}

/* grid */
.app>.sheet{flex:1;min-height:0;overflow:hidden}
table{width:100%;margin-top:-8px;border-collapse:separate;border-spacing:0;table-layout:fixed;font-family:"Liberation Sans",Arial,sans-serif;font-size:24px;line-height:26px;color:#000}
.c-h{width:46px}.c-a{width:518px}.c-b{width:384px}.c-c{width:464px}.c-f{width:612px}
tr{height:30px}
.h56{height:56px}.h58{height:58px}.h60{height:60px}.h98{height:98px}.h116{height:116px}.h118{height:118px}
td{padding:0 0 1px;border:solid #d4d4d4;border-width:0 2px 2px 0;text-align:center;vertical-align:bottom;white-space:nowrap}
td:last-child{border-right:0}
th{padding:0 0 2px;border:solid #bbb;border-width:0 2px 2px 0;border-bottom-color:#e2e2e2;background:linear-gradient(90deg,#fff,#f7f7f7);font-family:Lato,"Liberation Sans",sans-serif;font-size:21px;font-weight:400;color:#555;text-align:center;vertical-align:bottom}
.num,.name{padding-top:2px;font-weight:700;vertical-align:top}
td.num{padding-right:2px;border:0;background:#f8cbad}
td.name,td.in{border-color:#000;border-bottom:0}
td.in{background:#d9e1f2}
td.last{border-right-width:4px}
td.step{padding-left:38px;text-align:left;border-color:#000;border-right-width:4px}
td.b{font-weight:700}
.hosp td:nth-child(3),.hosp td:nth-child(4){border:solid #000;border-width:0 4px 4px 0;box-shadow:-4px -4px 0 #000}
.year td:nth-child(-n+6),.calc td:nth-child(-n+6){border:solid #000;border-width:0 4px 2px 0}
.calc td:nth-child(n+3):nth-child(-n+6){background:#d9e1f2}
.ans td:nth-child(-n+6){padding-bottom:6px;border-bottom-width:0;line-height:24px}
.ans td:nth-child(n+3):nth-child(-n+6){padding:0 38px 4px 0;line-height:20px;text-align:right}
.after td:nth-child(-n+6){border-top:2px solid #000;box-shadow:0 -2px 0 #d9e1f2,0 -4px 0 #000}
.after td:nth-child(2){box-shadow:0 -2px 0 #fff,0 -4px 0 #000}
.top td:nth-child(-n+5){border-top:2px solid #000;box-shadow:0 -2px 0 #fff,0 -4px 0 #000}
.top td:nth-child(n+3):nth-child(-n+5){padding-bottom:0;border-right-color:#000;border-bottom-color:#000}
.top td.num{padding-top:1px;box-shadow:0 -2px 0 #f8cbad,0 -4px 0 #000}
.top td:nth-child(3){padding-right:2px;border-left:2px solid #000}
.top td:nth-child(4){padding-right:2px}
.top td.exp{padding-left:4px;border-right-width:4px;text-align:left}

/* sheet tabs */
.sheets{display:flex;height:54px;border-top:2px solid #cacaca;border-bottom:2px solid #a0a0a0;background:#f1f1f1;font-family:"Liberation Sans",Arial,sans-serif;font-size:25px;color:#5c5c5c}
.sheets a,.arrows,.add{display:flex;align-items:center;justify-content:center;height:42px;padding:2px 42px 0;border-right:2px solid #cacaca;white-space:nowrap}
.sheets .lock{gap:16px;padding:2px 36px 0 28px}
.sheets .narrow{padding:2px 33px 0}
.sheets .late{padding:2px 39px 0}
.sheets .arrows{width:122px;gap:32px;padding:2px 0 0}
.sheets .pre{padding:2px 40px 0 42px;border-right:0}
.sheets .on{height:46px;margin-top:-2px;padding:2px 38px 0;border:solid #c4c4c4;border-width:0 2px 2px;border-radius:0 0 6px 6px;background:#fff;color:#217f4f;font-size:24px;font-weight:700;box-shadow:0 2px 2px #ccc}
.sheets .add{width:76px;padding:2px 0 0}

/* status bar */
.status{display:flex;align-items:center;height:44px;padding-right:48px;background:linear-gradient(#e4e4e4,#d6d6d6);font-size:24px;color:#4c4c4c}
.ready{width:158px;padding-left:48px}
.macro{margin-right:32px}
.acc{margin-right:7px}
.view{display:flex;align-items:center;justify-content:center;width:71px;height:44px}
.view.on{width:74px;background:#a5a5a5}
.zb{margin:0 14px}
.zb.out{margin-left:17px}
.zoom{appearance:none;width:200px;height:32px}
.zoom::-webkit-slider-runnable-track{height:8px;border-radius:4px;background:#9b9b9b}
.zoom::-webkit-slider-thumb{appearance:none;width:32px;height:32px;margin-top:-12px;border-radius:50%;background:#fff;box-shadow:0 1px 3px #888}
.pct{width:64px;margin-left:20px}
```
